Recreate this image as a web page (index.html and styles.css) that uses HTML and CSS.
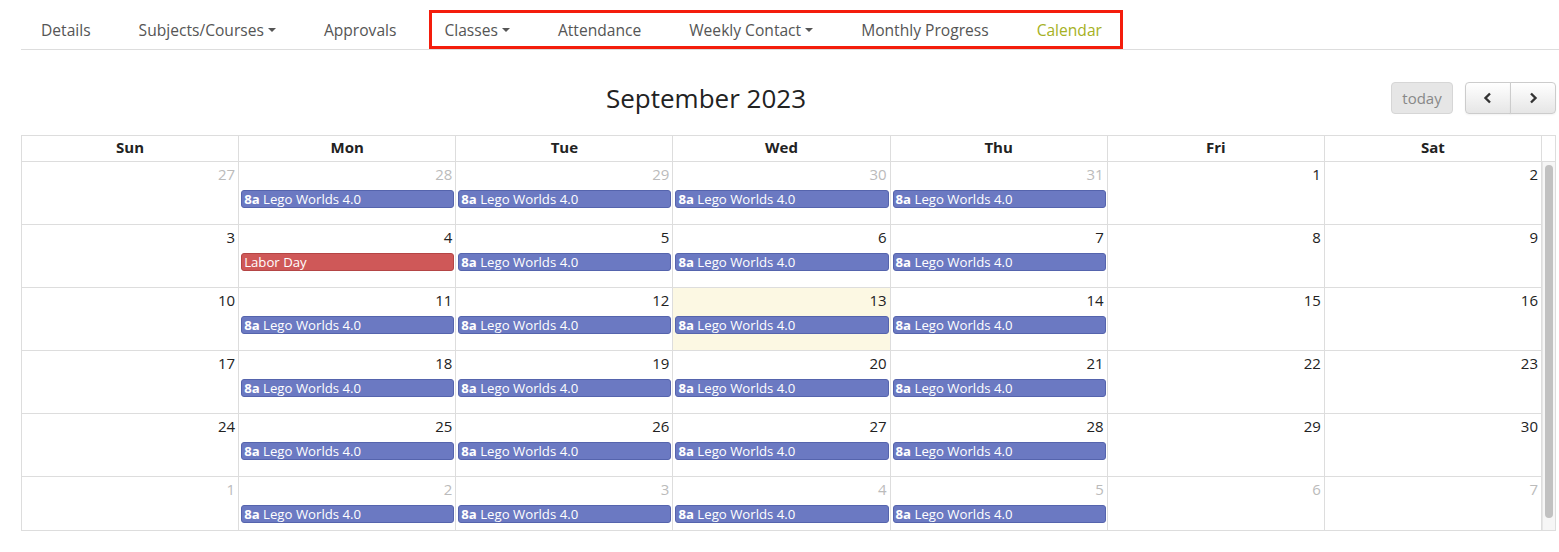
FILE: index.html
```html
<!DOCTYPE html>
<html>
<head>
<meta charset="utf-8">
<link rel="stylesheet" href="styles.css">
</head>
<body>
<div class="page">
  <nav class="tabs">
    <a class="tab">Details</a>
    <a class="tab">Subjects/Courses<span class="caret"></span></a>
    <a class="tab">Approvals</a>
    <div class="group">
      <a class="tab">Classes<span class="caret"></span></a>
      <a class="tab">Attendance</a>
      <a class="tab">Weekly Contact<span class="caret"></span></a>
      <a class="tab">Monthly Progress</a>
      <a class="tab active">Calendar</a>
    </div>
  </nav>

  <div class="cal">
    <div class="toolbar">
      <div class="tb-left"></div>
      <h2 class="title">September 2023</h2>
      <div class="tb-right">
        <button class="btn today">today</button>
        <div class="btn-group">
          <button class="btn nav"><svg width="14" height="14" viewBox="0 0 14 14"><path d="M9 2.5 L4.5 7 L9 11.5" fill="none" stroke="#333" stroke-width="2.4" stroke-linejoin="miter"/></svg></button>
          <button class="btn nav"><svg width="14" height="14" viewBox="0 0 14 14"><path d="M5 2.5 L9.5 7 L5 11.5" fill="none" stroke="#333" stroke-width="2.4" stroke-linejoin="miter"/></svg></button>
        </div>
      </div>
    </div>

    <div class="grid">
      <div class="head">
        <div class="hcell">Sun</div><div class="hcell">Mon</div><div class="hcell">Tue</div><div class="hcell">Wed</div><div class="hcell">Thu</div><div class="hcell">Fri</div><div class="hcell">Sat</div><div class="hspace"></div>
      </div>
      <div class="body">
        <div class="weeks">
          <div class="day other"><div class="num">27</div></div>
          <div class="day other"><div class="num">28</div><div class="ev"><b>8a</b> Lego Worlds 4.0</div></div>
          <div class="day other"><div class="num">29</div><div class="ev"><b>8a</b> Lego Worlds 4.0</div></div>
          <div class="day other"><div class="num">30</div><div class="ev"><b>8a</b> Lego Worlds 4.0</div></div>
          <div class="day other"><div class="num">31</div><div class="ev"><b>8a</b> Lego Worlds 4.0</div></div>
          <div class="day"><div class="num">1</div></div>
          <div class="day"><div class="num">2</div></div>

          <div class="day"><div class="num">3</div></div>
          <div class="day"><div class="num">4</div><div class="ev holiday">Labor Day</div></div>
          <div class="day"><div class="num">5</div><div class="ev"><b>8a</b> Lego Worlds 4.0</div></div>
          <div class="day"><div class="num">6</div><div class="ev"><b>8a</b> Lego Worlds 4.0</div></div>
          <div class="day"><div class="num">7</div><div class="ev"><b>8a</b> Lego Worlds 4.0</div></div>
          <div class="day"><div class="num">8</div></div>
          <div class="day"><div class="num">9</div></div>

          <div class="day"><div class="num">10</div></div>
          <div class="day"><div class="num">11</div><div class="ev"><b>8a</b> Lego Worlds 4.0</div></div>
          <div class="day"><div class="num">12</div><div class="ev"><b>8a</b> Lego Worlds 4.0</div></div>
          <div class="day today-cell"><div class="num">13</div><div class="ev"><b>8a</b> Lego Worlds 4.0</div></div>
          <div class="day"><div class="num">14</div><div class="ev"><b>8a</b> Lego Worlds 4.0</div></div>
          <div class="day"><div class="num">15</div></div>
          <div class="day"><div class="num">16</div></div>

          <div class="day"><div class="num">17</div></div>
          <div class="day"><div class="num">18</div><div class="ev"><b>8a</b> Lego Worlds 4.0</div></div>
          <div class="day"><div class="num">19</div><div class="ev"><b>8a</b> Lego Worlds 4.0</div></div>
          <div class="day"><div class="num">20</div><div class="ev"><b>8a</b> Lego Worlds 4.0</div></div>
          <div class="day"><div class="num">21</div><div class="ev"><b>8a</b> Lego Worlds 4.0</div></div>
          <div class="day"><div class="num">22</div></div>
          <div class="day"><div class="num">23</div></div>

          <div class="day"><div class="num">24</div></div>
          <div class="day"><div class="num">25</div><div class="ev"><b>8a</b> Lego Worlds 4.0</div></div>
          <div class="day"><div class="num">26</div><div class="ev"><b>8a</b> Lego Worlds 4.0</div></div>
          <div class="day"><div class="num">27</div><div class="ev"><b>8a</b> Lego Worlds 4.0</div></div>
          <div class="day"><div class="num">28</div><div class="ev"><b>8a</b> Lego Worlds 4.0</div></div>
          <div class="day"><div class="num">29</div></div>
          <div class="day"><div class="num">30</div></div>

          <div class="day other"><div class="num">1</div></div>
          <div class="day other"><div class="num">2</div><div class="ev"><b>8a</b> Lego Worlds 4.0</div></div>
          <div class="day other"><div class="num">3</div><div class="ev"><b>8a</b> Lego Worlds 4.0</div></div>
          <div class="day other"><div class="num">4</div><div class="ev"><b>8a</b> Lego Worlds 4.0</div></div>
          <div class="day other"><div class="num">5</div><div class="ev"><b>8a</b> Lego Worlds 4.0</div></div>
          <div class="day other"><div class="num">6</div></div>
          <div class="day other"><div class="num">7</div></div>
        </div>
        <div class="scrollbar"><div class="thumb"></div></div>
      </div>
    </div>
  </div>
</div>
</body>
</html>
```

FILE: styles.css
```css
* { box-sizing: border-box; }
html, body { margin: 0; padding: 0; background: #fff; }
body {
  font-family: "Open Sans", "Noto Sans", sans-serif;
  color: #222;
}
.page {
  padding: 0 3px 0 21px;
}

/* Tabs */
.tabs {
  display: flex;
  align-items: flex-end;
  gap: 8px;
  height: 50px;
  border-bottom: 1px solid #ddd;
  margin-right: -3px;
}
.tab {
  display: flex;
  align-items: center;
  height: 39px;
  padding: 0 20px;
  font-size: 15.6px;
  color: #555;
  white-space: nowrap;
  cursor: pointer;
}
.tab.active { color: #a5b124; }
.caret {
  display: inline-block;
  width: 0; height: 0;
  margin-left: 4px;
  margin-top: 1px;
  border-top: 4px solid #555;
  border-left: 4px solid transparent;
  border-right: 4px solid transparent;
}
.group {
  position: relative;
  display: flex;
  gap: 8px;
  height: 39px;
}
.group::after {
  content: "";
  position: absolute;
  top: 0; bottom: 0; left: 5px; right: -1px;
  border: 3px solid #f41d0c;
  pointer-events: none;
}

/* Calendar */
.cal { margin-top: 32px; }
.toolbar {
  display: flex;
  justify-content: space-between;
  align-items: center;
  height: 32px;
  margin-bottom: 21px;
}
.title {
  margin: 0;
  font-size: 26px;
  font-weight: 400;
  color: #222;
  line-height: 32px;
}
.tb-right {
  display: flex;
  gap: 12px;
}
.btn {
  font-family: "Open Sans", "Noto Sans", sans-serif;
  height: 32px;
  font-size: 15px;
  border: 1px solid #ccc;
  border-radius: 4px;
  background: linear-gradient(#fff, #e6e6e6);
  color: #333;
  padding: 0 10px;
  display: flex;
  align-items: center;
  justify-content: center;
}
.btn.today {
  width: 62px;
  background: #e6e6e6;
  color: #888;
  border-color: #d6d6d6;
  box-shadow: none;
}
.btn-group { display: flex; }
.btn.nav {
  width: 46px;
  box-shadow: inset 0 1px 0 rgba(255,255,255,.2), 0 1px 2px rgba(0,0,0,.05);
}
.btn-group .btn.nav:first-child { border-radius: 4px 0 0 4px; }
.btn-group .btn.nav:last-child { border-radius: 0 4px 4px 0; margin-left: -1px; }

.grid {
  border: 1px solid #ddd;
}
.head {
  display: grid;
  grid-template-columns: repeat(7, 1fr) 13px;
  border-bottom: 1px solid #ddd;
}
.hcell {
  height: 25px;
  line-height: 23px;
  text-align: center;
  font-weight: 700;
  font-size: 15px;
  color: #222;
  border-right: 1px solid #ddd;
}
.body {
  display: flex;
  height: 368px;
  overflow: hidden;
}
.weeks {
  flex: 1;
  display: grid;
  grid-template-columns: repeat(7, 1fr);
  grid-auto-rows: 63px;
  align-self: flex-start;
}
.day {
  border-right: 1px solid #ddd;
  border-bottom: 1px solid #ddd;
  padding: 2px 1px 0 2px;
  min-width: 0;
}
.today-cell { background: #fcf8e3; }
.num {
  text-align: right;
  font-size: 15px;
  line-height: 20px;
  padding-right: 2px;
  color: #222;
}
.other .num { color: #bbb; }
.ev {
  margin-top: 6px;
  height: 18px;
  line-height: 16px;
  font-size: 13.2px;
  color: #fff;
  background: #6b79c2;
  border: 1px solid #5564ad;
  border-radius: 3px;
  padding: 0 2px;
  white-space: nowrap;
  overflow: hidden;
}
.ev b { font-weight: 700; }
.ev.holiday {
  background: #cf5858;
  border-color: #b44545;
}
.scrollbar {
  width: 13px;
  flex: none;
  background: #f6f6f6;
  border-left: 1px solid #e6e6e6;
  padding: 3px 2px 0 2px;
}
.thumb {
  width: 8px;
  height: 353px;
  background: #c1c1c1;
  border-radius: 4px;
}
```
